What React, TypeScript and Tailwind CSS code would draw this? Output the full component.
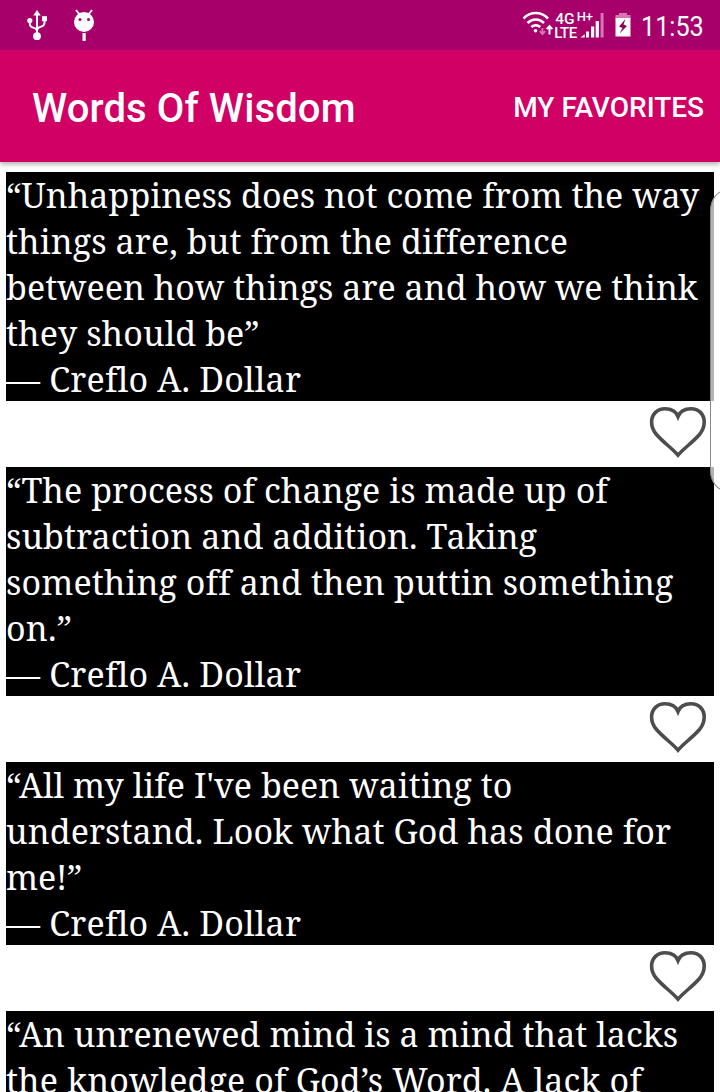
type Line = { text: string; spacing?: string };

const author: Line = { text: "— Creflo A. Dollar", spacing: "tracking-[0.21px]" };

const quotes: Line[][] = [
  [
    { text: "“Unhappiness does not come from the way", spacing: "tracking-[0.03px]" },
    { text: "things are, but from the difference", spacing: "tracking-[0.1px]" },
    { text: "between how things are and how we think", spacing: "tracking-[0.03px]" },
    { text: "they should be”", spacing: "tracking-[0.08px]" },
    author,
  ],
  [
    { text: "“The process of change is made up of", spacing: "tracking-[0.08px]" },
    { text: "subtraction and addition. Taking", spacing: "tracking-[0.08px]" },
    { text: "something off and then puttin something", spacing: "tracking-[0.1px]" },
    { text: "on.”", spacing: "tracking-[0.2px]" },
    author,
  ],
  [
    { text: "“All my life I've been waiting to", spacing: "tracking-[0.05px]" },
    { text: "understand. Look what God has done for", spacing: "tracking-[0.1px]" },
    { text: "me!”", spacing: "tracking-[-0.2px]" },
    author,
  ],
  [
    { text: "“An unrenewed mind is a mind that lacks", spacing: "tracking-[0.05px]" },
    { text: "the knowledge of God’s Word. A lack of", spacing: "tracking-[0.14px]" },
  ],
];

function UsbIcon() {
  return (
    <svg width="22" height="32" viewBox="0 0 22 32" fill="none" stroke="#fff" strokeWidth="2">
      <path d="M11 27V6" />
      <path d="M11 1l3.800 5.500H7.200z" fill="#fff" stroke="none" />
      <path d="M3.800 12v2.500c0 2.800 1.600 3.800 4 4.400 2 .5 3.200 1.100 3.200 3.100M18.500 10v3.500c0 2.800-1.800 3.800-4.100 4.400-2 .5-3.400 1.200-3.400 3.600" />
      <circle cx="3.800" cy="11.500" r="2.600" fill="#fff" stroke="none" />
      <path d="M16 7.200h5v5h-5z" fill="#fff" stroke="none" />
      <circle cx="11" cy="27.200" r="3.900" fill="#fff" stroke="none" />
    </svg>
  );
}

function DebugIcon() {
  return (
    <svg width="22" height="34" viewBox="0 0 22 34" fill="#fff">
      <path d="M3 1l3.500 4.500M19 1l-3.500 4.500" stroke="#fff" strokeWidth="2" />
      <circle cx="11" cy="13" r="10" />
      <circle cx="7" cy="10.500" r="1.500" fill="#a8006a" />
      <circle cx="15.500" cy="10.500" r="1.500" fill="#a8006a" />
      <rect x="9.500" y="24" width="3.200" height="8" />
    </svg>
  );
}

function WifiIcon() {
  return (
    <svg width="34" height="30" viewBox="0 0 34 30" fill="none" stroke="#fff" strokeWidth="2.600">
      <path d="M1.500 10.500c7-7.300 17.500-7.300 24.500 0" />
      <path d="M5.500 15c4.800-4.700 11.800-4.700 16.500 0" />
      <path d="M9.300 19c2.600-2.300 6.300-2.300 9 0" />
      <circle cx="13.500" cy="22.700" r="1.800" fill="#fff" stroke="none" />
      <path d="M20.500 20v6M17.800 23.200l2.700 3 2.700-3" stroke="#d577b3" strokeWidth="1.800" />
      <path d="M27.500 26.500v-7M24.700 21.200l2.800-3.200 2.800 3.200" strokeWidth="2" />
    </svg>
  );
}

function SignalIcon() {
  return (
    <svg width="26" height="28" viewBox="0 0 26 28" fill="#fff">
      <path d="M.5 24.500l4.200-3.200v3.200z" />
      <rect x="6" y="18.500" width="3" height="6" />
      <rect x="11" y="13.500" width="3.200" height="11" />
      <rect x="15.700" y="8" width="3.200" height="16.500" />
      <rect x="20.600" y="0" width="3" height="24.500" fill="#d577b3" />
    </svg>
  );
}

function BatteryIcon() {
  return (
    <svg width="16" height="24" viewBox="0 0 16 24">
      <path d="M4 0h8v2h3.500v4H.5V2H4z" fill="#d577b3" />
      <path d="M.5 5h15v18.500H.5z" fill="#fff" />
      <path d="M10.500 6L4 13.500l3.500 1.500-3 5.500L12 13l-3.500-1.500z" fill="#8d0056" />
    </svg>
  );
}

function Heart() {
  return (
    <svg width="60" height="54" viewBox="0 0 60 54" fill="none" stroke="#4d4d4d" strokeWidth="3.600">
      <path d="M30 50.200C24.500 43.500 15.500 37.600 8.500 29.500C4.600 25 3.600 21 3.600 17C3.600 9 9.500 3.800 17 3.800C23 3.800 28 6.500 30 11.500C32 6.500 37 3.800 43 3.800C50.500 3.800 56.200 9 56.200 17C56.200 21 55.200 25 51.500 29.500C44.500 37.600 35.500 43.500 30 50.200Z" />
    </svg>
  );
}

export default function App() {
  return (
    <div className="relative flex h-[1092px] w-[720px] flex-col overflow-hidden bg-white font-['Roboto',sans-serif] text-white">
      <header className="z-10 shrink-0 bg-[#d10064] shadow-[0_2px_5px_rgba(0,0,0,0.35)]">
        <div className="flex h-[50px] items-start justify-between bg-[#a8006a] pr-4 pl-[26px]">
          <div className="flex gap-[25px] pt-[9px]">
            <UsbIcon />
            <DebugIcon />
          </div>
          <div className="flex items-start">
            <div className="pt-[8px]"><WifiIcon /></div>
            <div className="-ml-[1px] flex w-[40px] flex-col pt-[12px] font-medium leading-[14px]">
              <div className="flex gap-[2px] text-[15.5px]">
                <span>4G</span>
                <span className="-mt-[2px] text-[13px]">H+</span>
              </div>
              <span className="-ml-px text-[15px] tracking-[-0.5px]">LTE</span>
            </div>
            <div className="-ml-[15px] pt-[13px]"><SignalIcon /></div>
            <div className="ml-[9px] pt-[13px]"><BatteryIcon /></div>
            <span className="ml-[3px] origin-right scale-x-90 pt-[10px] text-[28px] leading-[34px]">11:53</span>
          </div>
        </div>
        <div className="flex h-28 items-center justify-between pr-4 pl-8 font-medium">
          <h1 className="pt-[5px] text-[40px] tracking-[0.12px]">Words Of Wisdom</h1>
          <button className="pt-[3px] text-[28px]">MY FAVORITES</button>
        </div>
      </header>
      <main className="flex flex-col px-[6px] pt-[10px]">
        {quotes.map((lines, i) => (
          <article key={i} className="shrink-0">
            <div className="bg-black pb-px font-['Noto_Serif',serif] text-[34px] leading-[46px] whitespace-nowrap">
              {lines.map((line) => (
                <p key={line.text} className={`last:h-[44px] ${line.spacing ?? ""}`}>
                  {line.text}
                </p>
              ))}
            </div>
            <div className="flex h-[66px] justify-end pt-[4px] pr-[6px]">
              <Heart />
            </div>
          </article>
        ))}
      </main>
      <div className="absolute top-[190px] -right-[22px] z-20 h-[301px] w-[32px] rounded-[22px/28px] border border-[#888] bg-white/70" />
    </div>
  );
}
